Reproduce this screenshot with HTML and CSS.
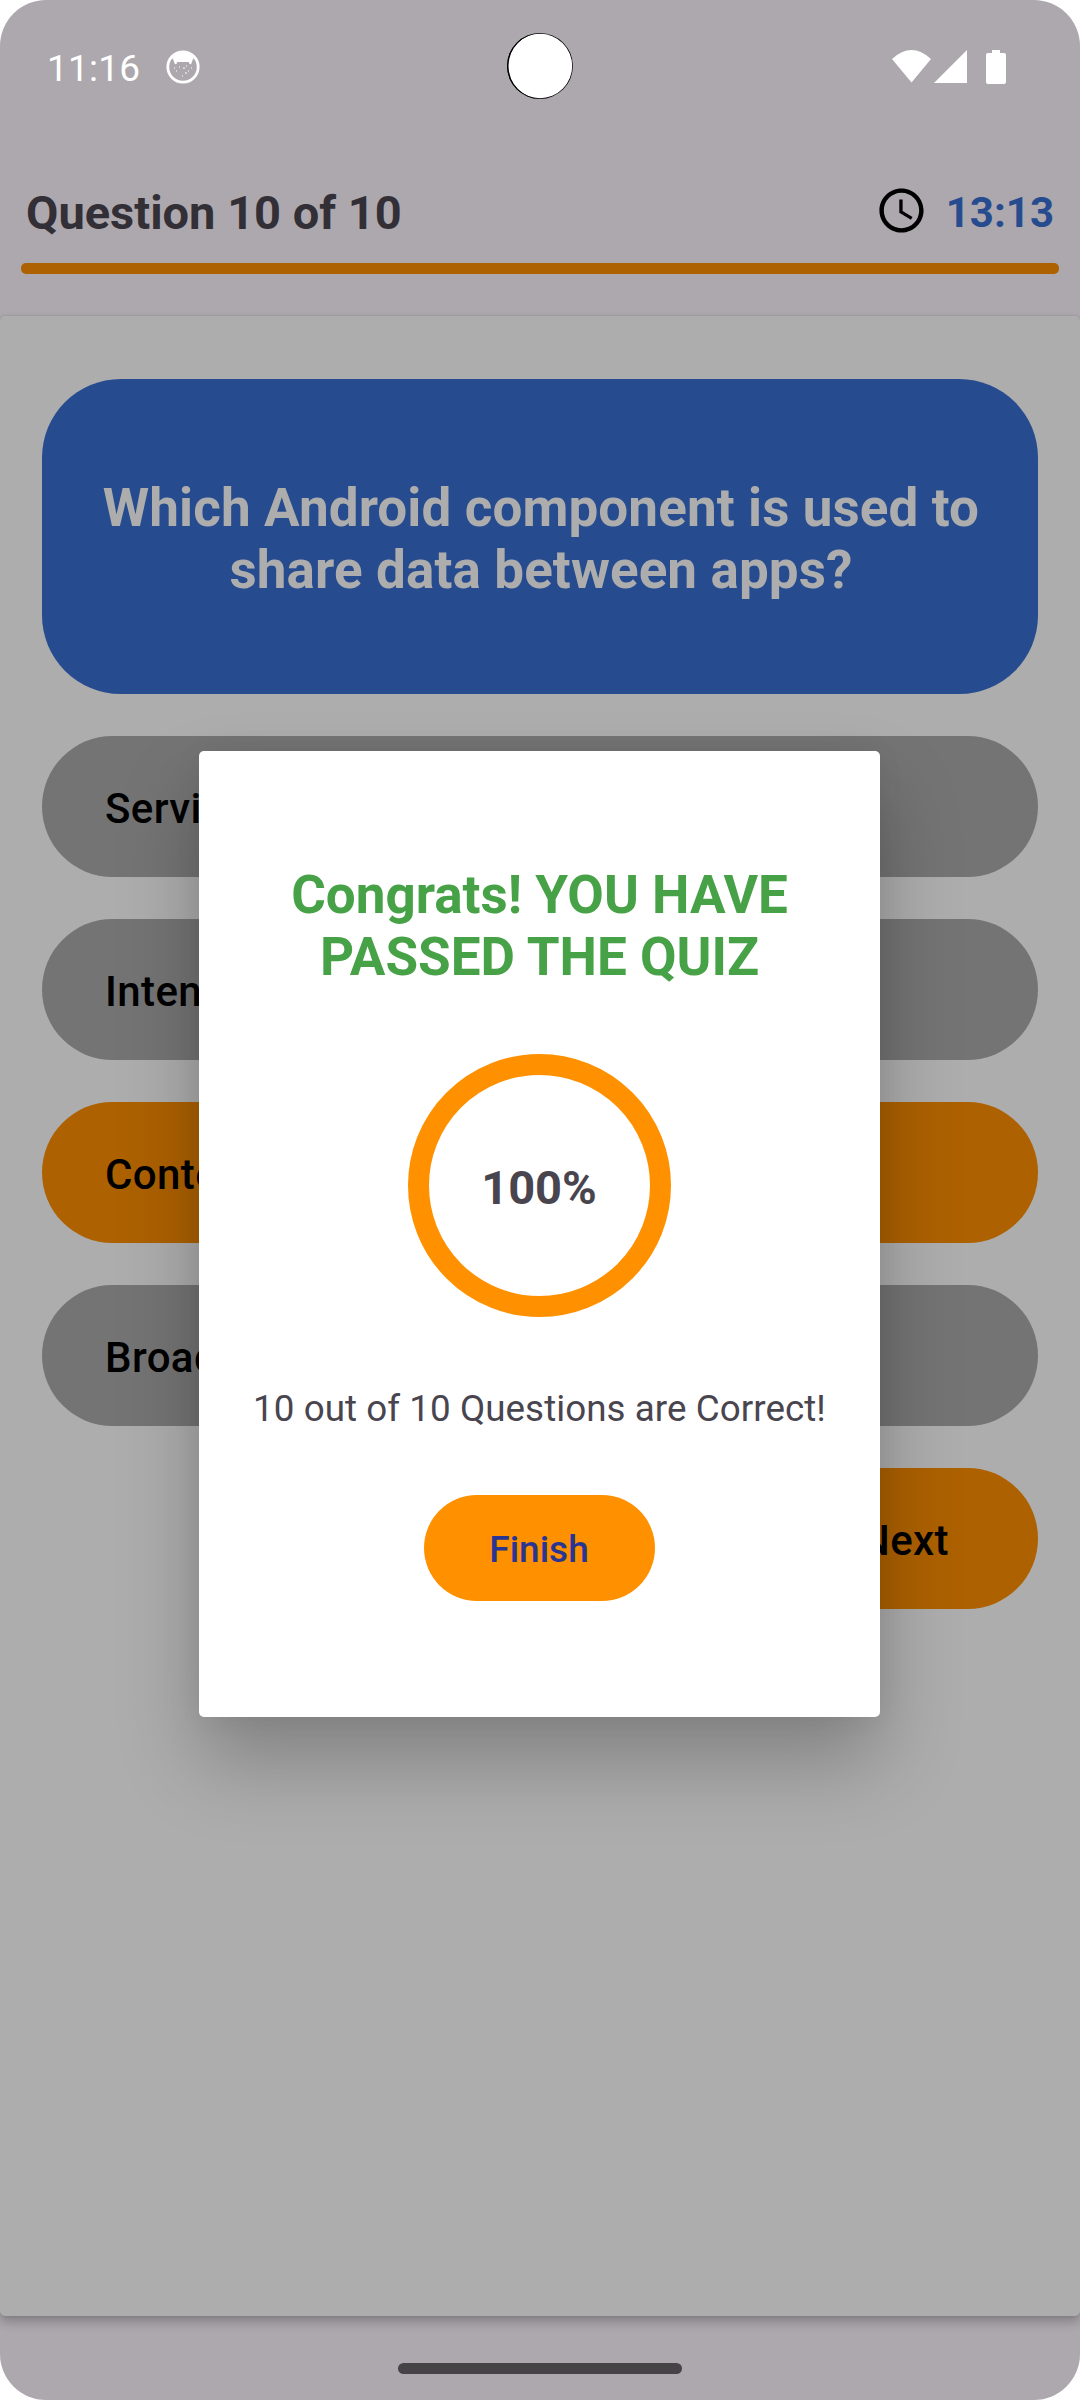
FILE: index.html
```html
<!DOCTYPE html>
<html lang="en">
<head>
<meta charset="utf-8">
<title>Quiz</title>
<link rel="stylesheet" href="styles.css">
</head>
<body>
<div class="screen">
  <header class="status">
    <span class="time">11:16</span>
    <svg class="cat" viewBox="0 0 34 34"><circle cx="17" cy="17" r="15.200" fill="none" stroke="#fff" stroke-width="2.800"/><path d="M6 8Q17-4 28 8L26 10L25 14L22.500 12H11.500L9 14L8 10Z" fill="#fff"/><path d="M8 9l2 5M26 9l-2 5" stroke="#fff" stroke-width="2"/><path d="M8 18h1M13 17h1M20 16h1M25 18h1M10 21h1M17 18h2M22 21h1M19 23h2M16 26h1" stroke="#fff" stroke-width="1.200"/></svg>
    <span class="camera"></span>
    <svg class="signals" viewBox="0 0 115 34"><path d="M0 9Q19.500-9 39 9L19.500 32.500Z M75 0V33H42Z M100 0h8v3h4q2 0 2 2v27q0 2-2 2h-16q-2 0-2-2V5q0-2 2-2h4Z" fill="#fff"/></svg>
  </header>
  <div class="quiz-bar">
    <span class="count">Question 10 of 10</span>
    <svg class="clock" viewBox="0 0 24 24"><path d="M11.990 2C6.470 2 2 6.480 2 12s4.470 10 9.990 10C17.520 22 22 17.520 22 12S17.520 2 11.990 2zM12 20c-4.420 0-8-3.580-8-8s3.580-8 8-8 8 3.580 8 8-3.580 8-8 8zM12.500 7H11v6l5.250 3.150.750-1.230-4.500-2.670z"/></svg>
    <span class="timer">13:13</span>
  </div>
  <div class="progress"></div>
  <main class="card">
    <h1 class="question">Which Android component is used to share data between apps?</h1>
    <div class="option">Service</div>
    <div class="option">Intent</div>
    <div class="option chosen">Content Provider</div>
    <div class="option">Broadcast Receiver</div>
    <div class="next">Next</div>
  </main>
  <div class="home"></div>
  <section class="dialog">
    <h2 class="result">Congrats! YOU HAVE PASSED THE QUIZ</h2>
    <div class="ring">100%</div>
    <p class="summary">10 out of 10 Questions are Correct!</p>
    <div class="finish">Finish</div>
  </section>
</div>
</body>
</html>
```
FILE: styles.css
```css
* { box-sizing: border-box; margin: 0; }
body { background: #fff; font-family: Roboto, sans-serif; }
.screen {
  position: relative;
  display: flex;
  flex-direction: column;
  width: 1080px;
  height: 2400px;
  border-radius: 46px;
  overflow: hidden;
  background: #ada8ad;
}
.status {
  position: relative;
  display: flex;
  align-items: center;
  height: 133px;
  padding: 0 73px 0 47px;
  color: #fff;
}
.time { width: 119px; font-size: 37px; line-height: 44px; padding-top: 4px; letter-spacing: .2px; }
.cat { width: 34px; height: 34px; }
.camera {
  position: absolute;
  left: 507px;
  top: 33px;
  width: 66px;
  height: 66px;
  border-radius: 50%;
  background: #fff;
  box-shadow: inset 1.500px 0 0 #000, inset 0 0 0 .8px #000;
}
.signals { width: 115px; height: 34px; margin-left: auto; }
.quiz-bar { display: flex; align-items: center; height: 130px; padding: 27px 26px 0; }
.count { margin-right: auto; padding-top: 1px; font-size: 47px; font-weight: 700; color: #332f37; }
.clock { width: 53px; height: 53px; margin: 0 18px 2px 0; }
.timer { padding-top: 2px; font-size: 42px; font-weight: 700; color: #264b8f; }
.progress { height: 11px; margin: 0 21px; border-radius: 5px; background: #ad6100; }
.card {
  display: flex;
  flex-direction: column;
  gap: 42px;
  height: 2000px;
  margin-top: 42px;
  padding: 63px 42px;
  border-radius: 5px;
  background: #adadad;
  box-shadow: 0 6px 11px rgba(0, 0, 0, .24), 0 0 3px rgba(0, 0, 0, .12);
}
.question {
  display: flex;
  align-items: center;
  height: 315px;
  padding: 5px 41px 0 43px;
  border-radius: 78.750px;
  background: #264b8f;
  color: #adadad;
  font-size: 53px;
  line-height: 62px;
  letter-spacing: .1px;
  font-weight: 700;
  text-align: center;
}
.option, .next {
  display: flex;
  align-items: center;
  height: 141px;
  padding: 4px 63px 0;
  border-radius: 71px;
  background: #747474;
  color: #000;
  font-size: 42px;
  font-weight: 500;
  letter-spacing: .4px;
}
.chosen, .next { background: #ad6100; }
.next { align-self: flex-end; width: 260px; padding-right: 89px; justify-content: flex-end; }
.home { width: 284px; height: 11px; margin: 47px auto 0; border-radius: 6px; background: #464346; }
.dialog {
  position: absolute;
  left: 199px;
  top: 751px;
  display: flex;
  flex-direction: column;
  align-items: center;
  width: 681px;
  height: 966px;
  padding-top: 113px;
  border-radius: 5px;
  background: #fff;
  color: #49454f;
  box-shadow: 0 44px 80px rgba(0, 0, 0, .25), 0 0 28px rgba(0, 0, 0, .05);
}
.result {
  width: 560px;
  color: #47a247;
  font-size: 53px;
  line-height: 62px;
  font-weight: 700;
  text-align: center;
}
.ring {
  display: flex;
  align-items: center;
  justify-content: center;
  width: 263px;
  height: 263px;
  margin-top: 66px;
  padding: 3px 1px 0 0;
  border: 21px solid #ff9000;
  border-radius: 50%;
  font-size: 47px;
  font-weight: 700;
}
.summary { margin-top: 70px; font-size: 36.750px; line-height: 44px; letter-spacing: .06px; white-space: nowrap; }
.finish {
  display: flex;
  align-items: center;
  justify-content: center;
  width: 231px;
  height: 106px;
  margin-top: 64px;
  padding: 2px 1px 0 0;
  border-radius: 53px;
  background: #ff9000;
  color: #283593;
  font-size: 37px;
  font-weight: 500;
}
```
